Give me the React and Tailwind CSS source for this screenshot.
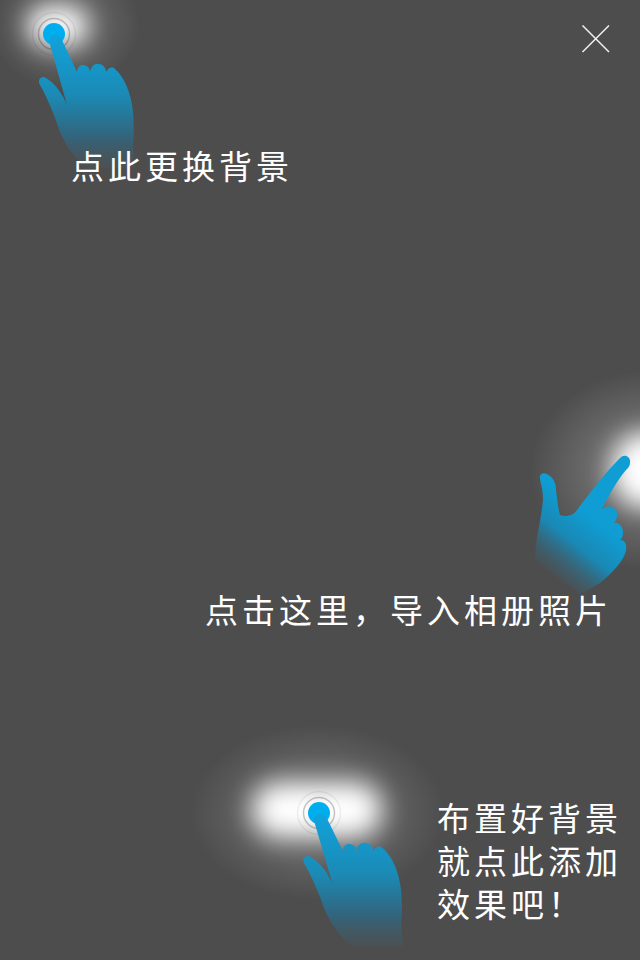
import React from "react";

const cjk = { fontFamily: '"Noto Sans CJK SC", "Noto Sans", sans-serif' };

// pointing hand, drawn with the fingertip dot at (54, 34)
function TapHand({ id, className, stretch = 1 }) {
  return (
    <svg className={className} width="150" height="175" viewBox="0 0 150 175" fill="none">
      <defs>
        <linearGradient id={id} gradientUnits="userSpaceOnUse" x1="0" y1="35" x2="0" y2="168">
          <stop offset="0" stopColor="#10a3dc" />
          <stop offset="0.45" stopColor="#1b8ab5" />
          <stop offset="0.75" stopColor="#31667f" />
          <stop offset="1" stopColor="#4a5357" stopOpacity="0.6" />
        </linearGradient>
      </defs>
      <circle cx="54" cy="34" r="21.5" stroke="#000" strokeOpacity="0.06" strokeWidth="1.5" />
      <circle cx="54" cy="34" r="15.5" stroke="#000" strokeOpacity="0.22" strokeWidth="1.5" />
      <circle cx="54" cy="34" r="11" fill="#00aeef" />
      <path
        transform={`translate(54 0) scale(${stretch} 1) translate(-54 0)`}
        d="M49 41 C48 35 58 32 61 38 L77 72 C77 67 80 65 83 65 C87 65 90 68 90 72 C91 66 95 63 99 64 C103 64 106 68 106 72 C108 68 112 66 115 69 C124 77 131 92 133 112 C134 125 134 135 133 146 L135 168 L88 168 C72 158 62 140 55 118 C51 108 46 95 40 85 C37 80 41 75 46 78 C56 84 63 95 67 105 Z"
        fill={`url(#${id})`}
      />
    </svg>
  );
}

function SideHand() {
  return (
    <svg className="absolute left-[530px] top-[450px]" width="105" height="150" viewBox="530 450 105 150" fill="none">
      <defs>
        <linearGradient id="sideHand" gradientUnits="userSpaceOnUse" x1="597" y1="522" x2="548" y2="583">
          <stop offset="0" stopColor="#0f9dd3" />
          <stop offset="0.4" stopColor="#1a88b4" />
          <stop offset="1" stopColor="#4d4d4d" stopOpacity="0.2" />
        </linearGradient>
      </defs>
      <path
        d="M620 458 C625 453 631 457 630 463 C630 466 628 468 626 470 C616 482 609 495 602 509 C608 505 613 506 616 510 C618 514 617 520 614 523 C619 522 623 527 623 532 C623 536 622 538 620 540 C625 540 627 545 626 550 C624 561 612 573 600 583 C592 588 586 591 580 594 L535 560 C535 540 541 522 543 500 C543 490 541 485 540 479 C539 474 543 472 547 474 C553 477 556 483 556 490 C557 498 558 508 560 515 C566 517 573 516 577 510 C590 493 604 474 620 458 Z"
        fill="url(#sideHand)"
      />
    </svg>
  );
}

export default function App() {
  return (
    <div
      className="relative w-[640px] h-[960px] overflow-hidden bg-[#4d4d4d] text-white flex flex-col text-[33px] leading-[43px] tracking-[4px] whitespace-nowrap"
      style={cjk}
    >
      {/* glow spots */}
      <div className="absolute left-[-10px] top-[-40px] w-[150px] h-[130px] rounded-full bg-[radial-gradient(closest-side,rgba(255,255,255,0.14)_40%,rgba(255,255,255,0)_100%)]" />
      <div className="absolute left-[28px] top-[6px] w-[60px] h-[40px] rounded-full bg-white blur-[12px]" />

      <div className="absolute left-[530px] top-[370px] w-[240px] h-[200px] rounded-full bg-[radial-gradient(closest-side,rgba(255,255,255,0.2)_40%,rgba(255,255,255,0)_100%)]" />
      <div className="absolute left-[612px] top-[432px] w-[70px] h-[76px] rounded-full bg-white blur-[12px]" />

      <div className="absolute left-[190px] top-[725px] w-[255px] h-[175px] rounded-full bg-[radial-gradient(closest-side,rgba(255,255,255,0.12)_55%,rgba(255,255,255,0)_100%)]" />
      <div className="absolute left-[252px] top-[782px] w-[130px] h-[56px] rounded-full bg-white blur-[13px]" />

      <TapHand id="handTop" className="absolute left-0 top-0" />
      <SideHand />
      <TapHand id="handBottom" className="absolute left-[265px] top-[779px]" stretch={1.04} />

      {/* close */}
      <button className="absolute left-[580px] top-[23px] w-[32px] h-[32px]">
        <svg width="32" height="32" viewBox="0 0 32 32" fill="none" stroke="#f2f2f2" strokeWidth="1.5">
          <path d="M2.500 2.500 L29 29 M29 2.500 L2.500 29" />
        </svg>
      </button>

      {/* hints */}
      <p className="relative ml-[71px] mt-[144px]">点此更换背景</p>
      <p className="relative self-end mr-[28px] mt-[401px]">点击这里，导入相册照片</p>
      <p className="relative self-end mr-[16px] mt-[165px] w-[187px]">
        布置好背景
        <br />
        就点此添加
        <br />
        效果吧！
      </p>
    </div>
  );
}
